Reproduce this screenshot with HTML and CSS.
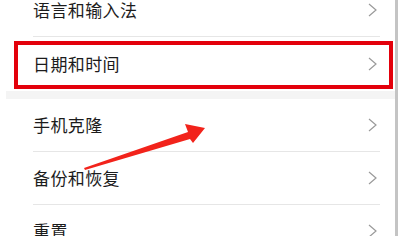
FILE: index.html
```html
<!DOCTYPE html>
<html lang="zh-CN">
<head>
  <meta charset="UTF-8" />
  <meta name="viewport" content="width=device-width, initial-scale=1.0"/>
  <title>系统设置</title>
  <link rel="stylesheet" href="styles.css">
</head>
<body>

  <div class="screen">
    <div class="group first">
      <div class="row">
        <span class="label">语言和输入法</span>
        <svg class="chevron" viewBox="0 0 9 14"><polyline points="1,1 8,7 1,13" /></svg>
      </div>
      <div class="row last">
        <span class="label">日期和时间</span>
        <svg class="chevron" viewBox="0 0 9 14"><polyline points="1,1 8,7 1,13" /></svg>
      </div>
    </div>

    <div class="gap"></div>

    <div class="group">
      <div class="row">
        <span class="label">手机克隆</span>
        <svg class="chevron" viewBox="0 0 9 14"><polyline points="1,1 8,7 1,13" /></svg>
      </div>
      <div class="row">
        <span class="label">备份和恢复</span>
        <svg class="chevron" viewBox="0 0 9 14"><polyline points="1,1 8,7 1,13" /></svg>
      </div>
      <div class="row">
        <span class="label">重置</span>
        <svg class="chevron" viewBox="0 0 9 14"><polyline points="1,1 8,7 1,13" /></svg>
      </div>
    </div>

    <!-- annotation overlays -->
    <div class="highlight"></div>
    <svg class="arrow" viewBox="0 0 403 236">
      <polygon points="85,170 84,168 188,132 185,124 205,128 193,143 190,139" />
    </svg>
  </div>

</body>
</html>
```

FILE: styles.css
```css
body {
  margin: 0;
  font-family: "Noto Sans CJK SC", "Noto Sans", sans-serif;
  background-color: #fff;
  color: #1c1c1c;
  width: 403px;
  height: 236px;
  overflow: hidden;
}

.screen {
  position: relative;
  width: 395px;
  height: 236px;
  border-right: 3px solid #c4c4c4;
  overflow: hidden;
}

.group.first {
  margin-top: -16px;
}

.row {
  display: flex;
  align-items: center;
  justify-content: space-between;
  height: 53px;
  margin-left: 33px;
  margin-right: 15px;
  padding-right: 3px;
  border-bottom: 1px solid #e6e6e6;
  box-sizing: border-box;
}

.row.last {
  height: 54px;
  border-bottom: none;
}

.label {
  font-size: 17px;
  line-height: 20px;
  letter-spacing: 0.4px;
}

.chevron {
  width: 9px;
  height: 14px;
}

.chevron polyline {
  fill: none;
  stroke: #9a9a9a;
  stroke-width: 1.2;
}

.gap {
  height: 8px;
  margin-left: 6px;
  background-color: #f4f4f4;
}

.highlight {
  position: absolute;
  left: 14px;
  top: 41px;
  width: 379px;
  height: 48px;
  border: 4px solid #e3000b;
  box-sizing: border-box;
}

.arrow {
  position: absolute;
  left: 0;
  top: 0;
  width: 403px;
  height: 236px;
}

.arrow polygon {
  fill: #f2231b;
}
```
